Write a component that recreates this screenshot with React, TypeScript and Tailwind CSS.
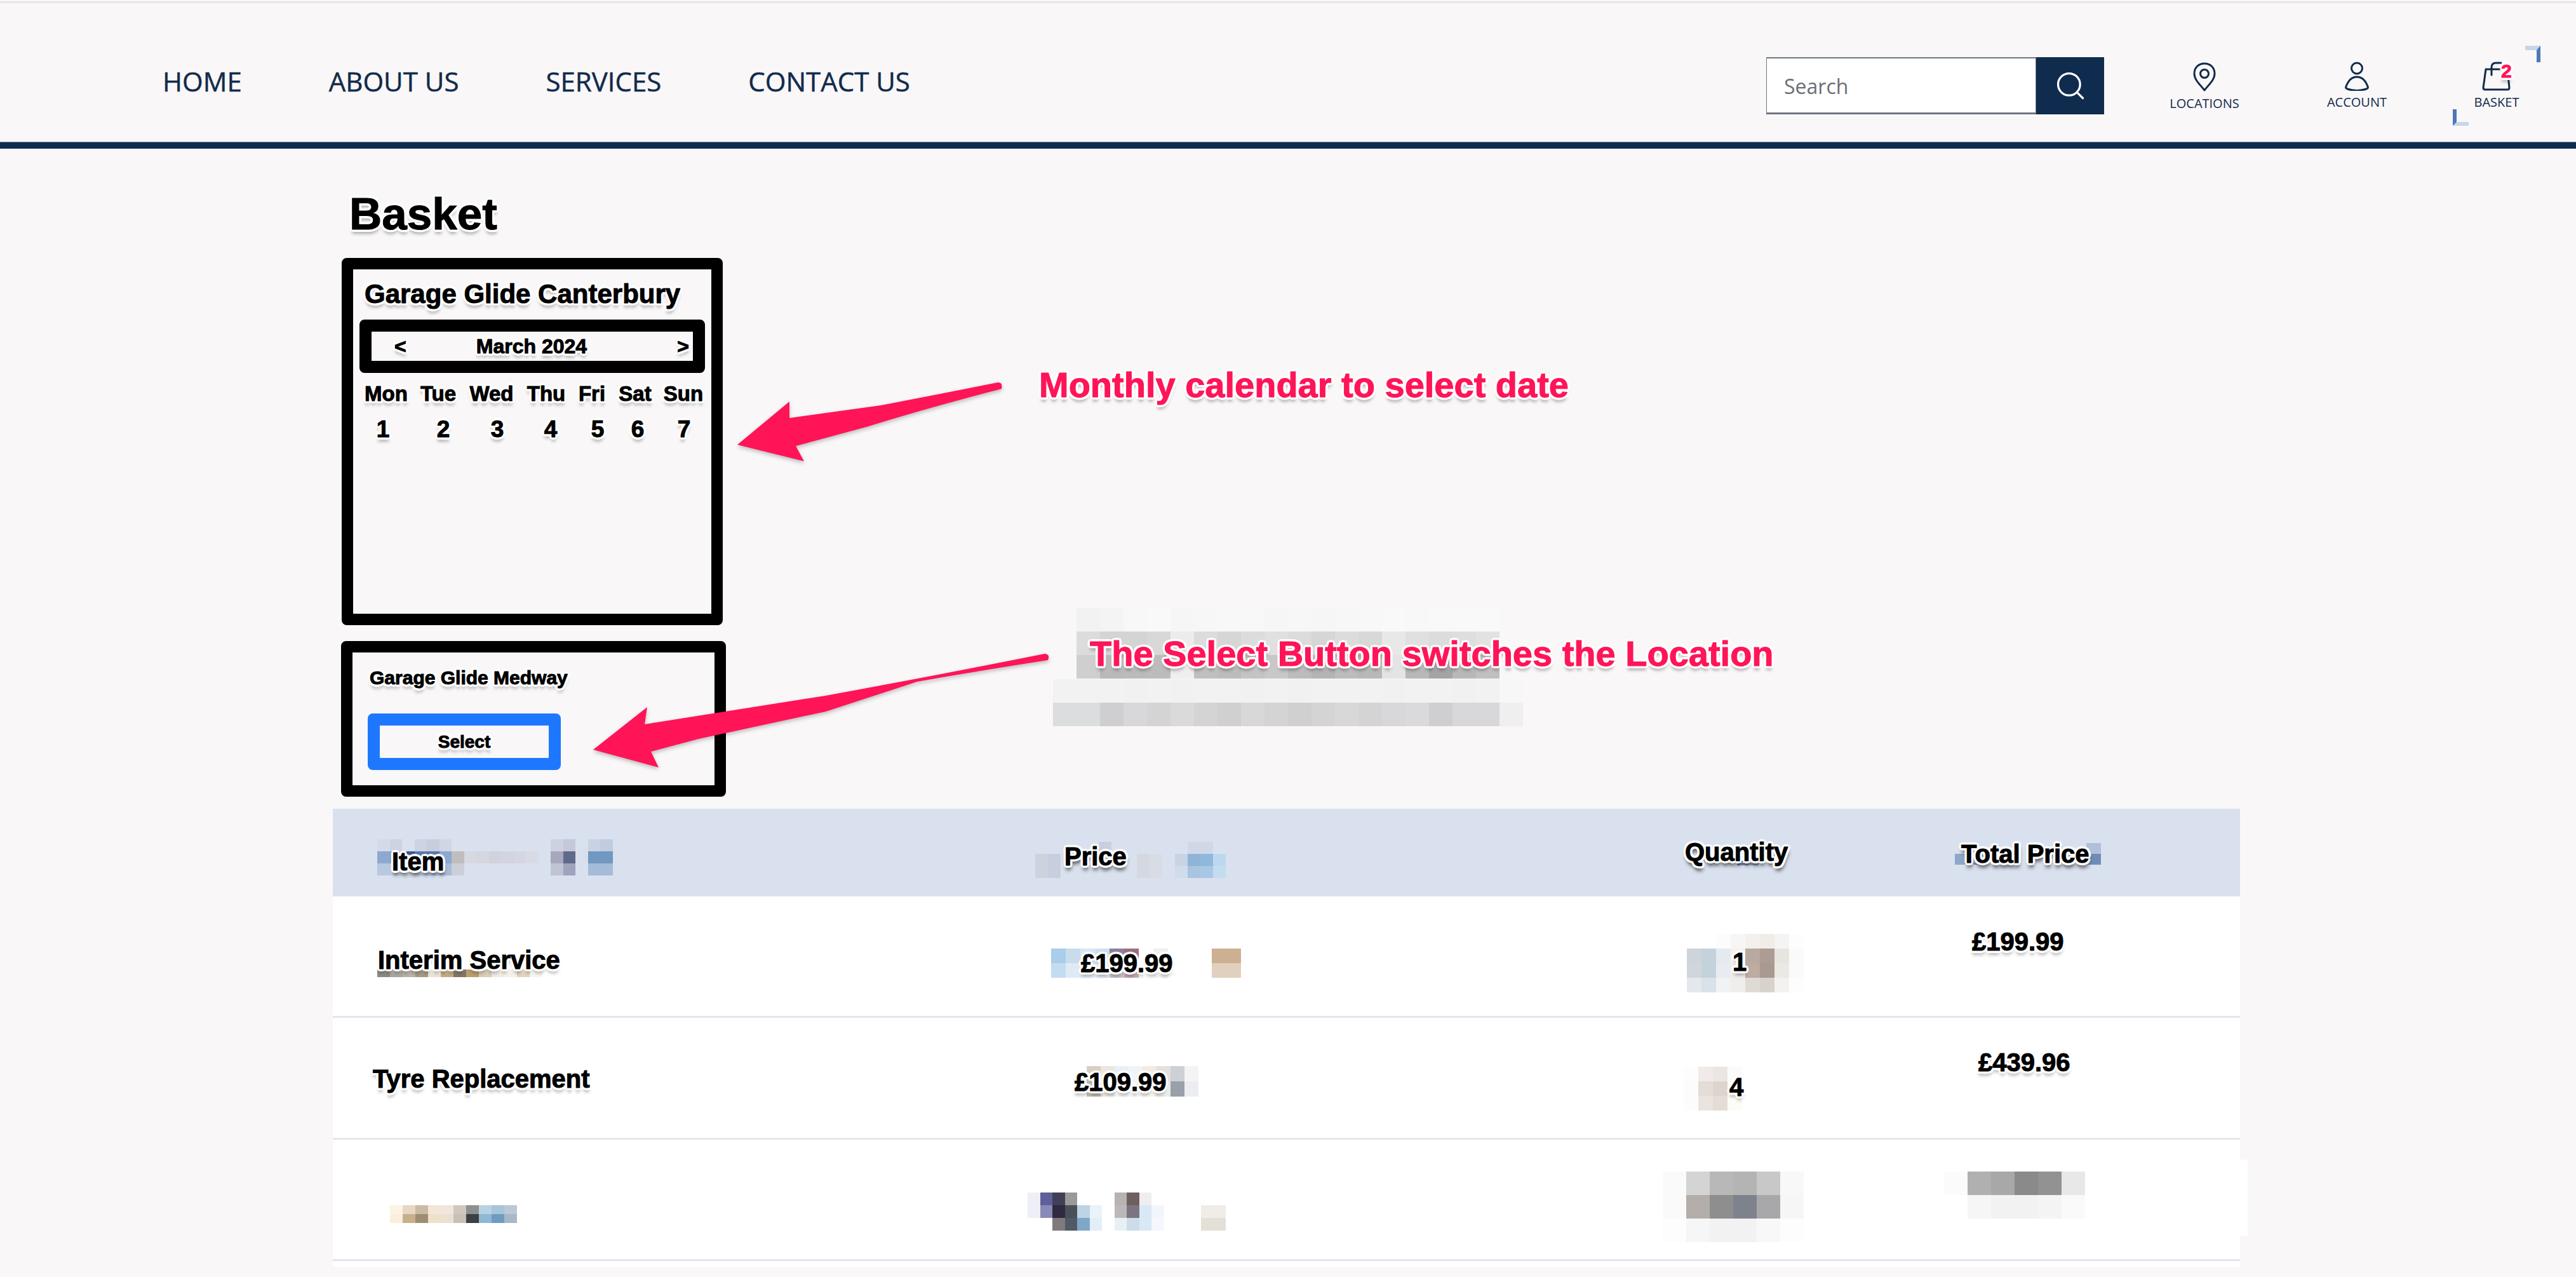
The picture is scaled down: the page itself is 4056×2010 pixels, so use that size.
import { Search } from 'lucide-react';

const outline =
  "[-webkit-text-stroke:1px_currentColor] [text-shadow:4px_0_0_#fff,-4px_0_0_#fff,0_4px_0_#fff,0_-4px_0_#fff,3px_3px_0_#fff,-3px_3px_0_#fff,3px_-3px_0_#fff,-3px_-3px_0_#fff,0_7px_5px_rgba(0,0,0,0.3)]";
const outlineDark =
  "[-webkit-text-stroke:1px_currentColor] [text-shadow:4px_0_0_#fff,-4px_0_0_#fff,0_4px_0_#fff,0_-4px_0_#fff,3px_3px_0_#fff,-3px_3px_0_#fff,3px_-3px_0_#fff,-3px_-3px_0_#fff,1px_7px_6px_rgba(0,0,0,0.85)]";
const cellText = `relative z-10 block whitespace-nowrap text-[40px] leading-none font-bold text-black ${outline}`;
const headText = `relative z-10 block whitespace-nowrap text-[40px] leading-none font-bold text-black ${outlineDark}`;

const days = ['Mon', 'Tue', 'Wed', 'Thu', 'Fri', 'Sat', 'Sun'];
const dates = [
  { n: '1', cls: 'pr-[10px]' },
  { n: '2', cls: 'pl-[16px]' },
  { n: '3', cls: 'pl-[18px]' },
  { n: '4', cls: 'pl-[14px]' },
  { n: '5', cls: 'pl-[18px]' },
  { n: '6', cls: 'pl-[8px]' },
  { n: '7', cls: 'pl-[2px]' },
];

// pixelated leftovers, each row is a list of hex colours, "-" leaves the cell empty
function Mosaic({ className, rows }: { className: string; rows: string[] }) {
  return (
    <div className={`absolute grid ${className}`}>
      {rows.flatMap((row, r) =>
        row.split(' ').map((c, i) => (
          <div key={`${r}-${i}`} style={c === '-' ? undefined : { backgroundColor: c }} />
        )),
      )}
    </div>
  );
}

function Arrows() {
  return (
    <svg
      className="absolute top-0 left-0 z-20 h-[2010px] w-[4056px] drop-shadow-[0_3px_3px_rgba(0,0,0,0.25)]"
      viewBox="0 0 4056 2010"
      fill="#ff1458"
    >
      <path d="M1161 700 L1243 632 L1243 658 Q1300 650 1387 638 Q1480 620 1571 602 Q1579 601 1577 612 Q1460 642 1364 672 Q1290 692 1253 702 L1266 726 Z" />
      <path d="M934 1180 L1019 1113 L1015 1140 L1300 1095 Q1480 1062 1645 1029 Q1654 1030 1650 1039 Q1540 1056 1444 1073 L1300 1120 L1100 1163 L1025 1183 L1037 1208 Z" />
    </svg>
  );
}

export default function App() {
  return (
    <div className="relative h-[2010px] w-[4056px] overflow-hidden bg-[#f9f7f8] font-['Liberation_Sans',Arial,sans-serif]">
      {/* Top nav */}
      <div className="mt-[2px] h-[3px] bg-[#e6e6e6]" />
      <header className="flex h-[218px] items-start font-['Open_Sans',sans-serif] text-[#122b4a]">
        <nav className="flex gap-[137px] pt-[98px] pl-[256px] text-[42px] leading-[50px] font-medium whitespace-nowrap [-webkit-text-stroke:0.5px_currentColor]">
          <a>HOME</a>
          <a>ABOUT US</a>
          <a>SERVICES</a>
          <a>CONTACT US</a>
        </nav>
        <div className="relative mr-[5px] ml-auto flex items-start pt-[85px]">
          <div className="flex h-[90px] w-[425px] items-center border-x border-t-2 border-b-[3px] border-[#6f7580] bg-white pt-[3px] pl-[27px] text-[32px] text-[#6b6f76]">
            <span>Search</span>
          </div>
          <div className="flex h-[90px] w-[107px] items-center justify-center bg-[#0f2c4f]">
            <Search className="h-[52px] w-[52px] text-white" strokeWidth={1.5} />
          </div>
          <div className="ml-[58px] flex w-[200px] flex-col items-center">
            <svg className="mt-[8px] h-[46px] w-[36px]" viewBox="0 0 36 46" fill="none" stroke="#122b4a" strokeWidth="3">
              <path d="M18 44 C12 36 2 28 2 18 C2 8 9 2 18 2 C27 2 34 8 34 18 C34 28 24 36 18 44 Z" strokeLinejoin="round" />
              <circle cx="18" cy="18" r="6.5" />
            </svg>
            <span className="mt-[7px] text-[20px] leading-[24px]">LOCATIONS</span>
          </div>
          <div className="ml-[40px] flex w-[200px] flex-col items-center">
            <svg className="mt-[7px] h-[46px] w-[38px]" viewBox="0 0 38 46" fill="none" stroke="#122b4a" strokeWidth="3">
              <circle cx="19" cy="10.5" r="8.5" />
              <path d="M19 24 C28 24 33 31 36 39 C37 41 36 42 34 43 C25 46 13 46 4 43 C2 42 1 41 2 39 C5 31 10 24 19 24 Z" />
            </svg>
            <span className="mt-[6px] text-[20px] leading-[24px]">ACCOUNT</span>
          </div>
          <div className="relative flex w-[240px] flex-col items-center">
            <svg className="mt-[7px] h-[46px] w-[46px]" viewBox="0 0 46 46" fill="none" stroke="#122b4a" strokeWidth="3" strokeLinecap="round">
              <path d="M6 12 H40 L43 41 Q43 44 40 44 H5 Q2 44 2 41 Z" strokeLinejoin="round" />
              <path d="M15 21 V9 Q15 2 22 2 H30" />
            </svg>
            <span className="mt-[6px] text-[20px] leading-[24px]">BASKET</span>
            <span className={`absolute top-[8px] left-[127px] font-['Liberation_Sans',sans-serif] text-[30px] leading-[28px] font-bold text-[#ff1458] ${outline}`}>2</span>
          </div>
          {/* focus corners around the basket */}
          <div className="absolute top-[67px] left-[1195px] h-[26px] w-[24px] border-t-[7px] border-r-[6px] border-t-[#c6d6ea] border-r-[#4a7ab5]" />
          <div className="absolute top-[167px] left-[1081px] h-[26px] w-[25px] border-b-[6px] border-l-[6px] border-b-[#c6d6ea] border-l-[#4a7ab5]" />
        </div>
      </header>
      <div className="h-[11px] border-t border-[#8f9aa8] bg-[#0f2c4f]" />

      <main className="pl-[524px]">
        <h1 className={`mt-[67px] ml-[26px] text-[71px] leading-none font-bold text-black ${outline}`}>Basket</h1>

        {/* Calendar card */}
        <section className="mt-[34px] ml-[14px] h-[578px] w-[600px] rounded-lg border-[18px] border-black">
          <h2 className={`mt-[18px] ml-[18px] text-[42px] leading-none font-bold whitespace-nowrap ${outline}`}>Garage Glide Canterbury</h2>
          <div className="mt-[19px] ml-[10px] h-[84px] w-[544px] rounded-lg border-[19px] border-black">
            <div className={`flex h-[46px] items-center justify-between pr-[6px] pl-[36px] text-[32px] font-bold ${outline}`}>
              <span>&lt;</span>
              <span className="mr-[32px]">March 2024</span>
              <span>&gt;</span>
            </div>
          </div>
          <div className="mt-[16px] ml-[8px] grid w-[552px] grid-cols-[88px_76px_92px_80px_64px_72px_80px] text-center">
            {days.map((d) => (
              <span key={d} className={`text-[33px] leading-none font-bold ${outline}`}>{d}</span>
            ))}
            {dates.map((d) => (
              <span key={d.n} className={`mt-[21px] text-[37px] leading-none font-bold ${d.cls} ${outline}`}>{d.n}</span>
            ))}
          </div>
        </section>

        {/* Other location */}
        <section className="mt-[25px] ml-[13px] h-[245px] w-[606px] rounded-lg border-[18px] border-black">
          <h3 className={`mt-[25px] ml-[27px] text-[30px] leading-none font-bold whitespace-nowrap ${outline}`}>Garage Glide Medway</h3>
          <button className={`mt-[41px] ml-[24px] h-[89px] w-[304px] rounded-lg border-[19px] border-[#1e78ff] text-[28px] font-bold ${outline}`}>Select</button>
        </section>

        {/* Basket table */}
        <div className="mt-[19px] w-[3003px]">
          <div className="grid h-[138px] grid-cols-[1096px_980px_450px_477px] bg-[#dae1ee]">
            <span className={`pt-[63px] pl-[93px] ${headText}`}>Item</span>
            <span className={`pt-[55px] pl-[56px] ${headText}`}>Price</span>
            <span className={`pt-[48px] pl-[53px] ${headText}`}>Quantity</span>
            <span className={`pt-[51px] pl-[38px] ${headText}`}>Total Price</span>
          </div>
          <div className="grid h-[191px] grid-cols-[1096px_980px_450px_477px] border-b-[3px] border-[#e4e6ee] bg-white">
            <span className={`pt-[80px] pl-[71px] ${cellText}`}>Interim Service</span>
            <span className={`pt-[85px] pl-[82px] ${cellText}`}>£199.99</span>
            <span className={`pt-[83px] pl-[128px] ${cellText}`}>1</span>
            <span className={`pt-[51px] pl-[55px] ${cellText}`}>£199.99</span>
          </div>
          <div className="grid h-[192px] grid-cols-[1096px_980px_450px_477px] border-b-[3px] border-[#e4e6ee] bg-white">
            <span className={`pt-[76px] pl-[63px] ${cellText}`}>Tyre Replacement</span>
            <span className={`pt-[81px] pl-[72px] ${cellText}`}>£109.99</span>
            <span className={`pt-[89px] pl-[123px] ${cellText}`}>4</span>
            <span className={`pt-[50px] pl-[65px] ${cellText}`}>£439.96</span>
          </div>
          <div className="h-[191px] border-b-[3px] border-[#e4e6ee] bg-white" />
          <div className="h-[9px] bg-white" />
        </div>
      </main>

      {/* blurred content that was masked in the screenshot */}
      <Mosaic
        className="top-[957px] left-[1695px] grid-cols-[repeat(18,37px)] auto-rows-[37px]"
        rows={[
          '#f2f2f2 #f4f4f4 #f8f8f8 #f9f9f9 #f6f6f6 #f7f7f7 #f8f8f8 #f8f8f8 #f6f6f6 #f7f7f7 #f6f6f6 #f7f7f7 #f8f8f8 #f9f9f9 #f8f8f8 #f9f9f9 #f9f9f9 #f9f9f9',
          '#dcdcdc #d4d4d4 #d4d4d4 #d8d8d8 #ececec #dcdcdc #d6d6d6 #dcdcdc #e0e0e0 #dcdcdc #d6d6d6 #dcdcdc #d8d8d8 #e8e8e8 #e0e0e0 #dcdcdc #dedede #e2e2e2',
          '#cfcfcf #b9b9b9 #bbbbbb #bcbcbc #efefef #c0c0c0 #bcbcbc #c4c4c4 #c8c8c8 #bcbcbc #b4b4b4 #bcbcbc #b8b8b8 #e4e4e4 #b8b8b8 #a4a4a6 #b8b8b8 #c0c0c0',
        ]}
      />
      <Mosaic
        className="top-[1069px] left-[1658px] grid-cols-[repeat(20,37px)] auto-rows-[37px]"
        rows={[
          '#f2f2f2 #f2f2f2 #f2f2f2 #f1f1f1 #f2f2f2 #f1f1f1 #f2f2f2 #f2f2f2 #f1f1f1 #f2f2f2 #f1f1f1 #f2f2f2 #f2f2f2 #f2f2f2 #f1f1f1 #f2f2f2 #f2f2f2 #f1f1f1 #f2f2f2 #f7f7f7',
          '#dcdddf #dcdddf #cfcfd1 #d8d8da #d4d4d4 #dadada #d4d4d4 #d0d0d0 #d8d8d8 #d4d4d4 #d0d0d0 #d4d4d4 #d8d8d8 #d4d4d4 #d8d8da #dadadc #cfcfd1 #d8d8da #d8d8da #efefef',
        ]}
      />
      <Mosaic
        className="top-[1321px] left-[594px] grid-cols-[repeat(19,19.5px)] auto-rows-[19px]"
        rows={[
          '#d4dae8 #ccd3e3 - #cdd3e2 #c6cede #d0d6e3 - - - - - - - - #cdd2e0 #c4c8d8 - #c8d2e3 #c0cce0',
          '#8fa8cf #7f9cc8 #3f5a8c #5b78ab #5a76aa #8da8cf #c0bdbf #d6d8e2 #d4d6e0 #d0d2de #d2d4e0 #d4d6e2 #d8dae6 - #a6a8bb #5f6a8a #d9dfec #7098c0 #7098c0',
          '#b8c8e0 #c4d0e4 - #c0cce0 #a8bcd8 #a8bcd8 #cccfd8 - - - - - - - #c0c4d4 #9ea4bc - #a4bcd8 #a4bcd8',
        ]}
      />
      <Mosaic
        className="top-[1325px] left-[1630px] grid-cols-[repeat(15,20px)] auto-rows-[19px]"
        rows={[
          '- - - - - #c8cfdf - - - - - - #d0d8e8 #d0d8e8 -',
          '#cdd2df #c8cede - - - - - - #d4d8e0 #d8dce4 - #c8d4e4 #8fb4d8 #90b8dc #bcd8ec',
          '#cdd2df #c8cede - - - - - - #d4d8e0 #d8dce4 - #d0dcea #a8c4e0 #a8c8e4 #c4dcf0',
        ]}
      />
      <Mosaic className="top-[1354px] left-[2735px] grid-cols-[repeat(2,17px)] auto-rows-[8px]" rows={['#6f85b0 #8fa0c4']} />
      <Mosaic
        className="top-[1327px] left-[3078px] grid-cols-[repeat(10,23px)] auto-rows-[17px]"
        rows={[
          '- - - - - - - - - #b0c0d8',
          '#8ea6c8 #7f98c0 - - - - - - - #6f8cb8',
        ]}
      />
      <Mosaic
        className="top-[1526px] left-[594px] grid-cols-[repeat(13,20px)] auto-rows-[12px]"
        rows={['#8d8a85 #a8a59e #b9b2a6 #a39a85 #e8e3d8 #c0ab85 #7f7566 #b99f70 #d9cdb8 #f0ece4 #f5f0e8 #e0d4c0 #f8f4ee']}
      />
      <Mosaic
        className="top-[1493px] left-[1655px] grid-cols-[repeat(13,23px)] auto-rows-[23px]"
        rows={[
          '#a9cdea #c8dcec #d8e8f4 #cfe0ee #8c7f9a #9a6f80 - #eeeeee - - - #cdb091 #cdb091',
          '#c4dcf0 #dfeaf4 #e8f0f8 #e4eef6 #c8c0cc #c8a8b4 - #f4f4f4 - - - #e0d0bd #e0d0bd',
        ]}
      />
      <Mosaic
        className="top-[1678px] left-[1689px] grid-cols-[repeat(9,22px)] auto-rows-[24px]"
        rows={[
          '- #d8cfc0 #ece6dc #e8eff8 #f0f4f8 #f4ebdf #e4e0dc #cdd0d6 #f4f4f4',
          '- #c4bdb0 #e8e4dc #f0f4f8 #f4f6f8 #f8f4ee #ecece8 #9aa0aa #ecedf0',
        ]}
      />
      <Mosaic
        className="top-[1897px] left-[614px] grid-cols-[repeat(10,20px)] auto-rows-[14px]"
        rows={[
          '#fdf3e4 #e6d8c2 #cbbba6 #f3e6d8 #f1e6dc #cfc8bf #8f8f8f #b9d2e2 #a8c4d8 #bcc8d4',
          '#fbeedd #c9b08c #a08c70 #efe0cc #ece0d0 #c8c0b4 #3c3f46 #8fb8d4 #6f9cc0 #a8b8c8',
        ]}
      />
      <Mosaic
        className="top-[1877px] left-[1618px] grid-cols-[repeat(16,19.5px)] auto-rows-[20px]"
        rows={[
          '#eeeef6 #5f5f9a #3f3f55 #9a9a9a - - - #b9b2b2 #6f6060 #eeeeee - - - - - -',
          '#eeeef6 #8a8ab8 #2f2a40 #4a4f58 #bcd4e4 #eaf2fa - #bdb8b8 #7a7580 #d8e8f4 #f0f6fc - - - #f0ece8 #f0ece8',
          '- - #807a7c #4f5a66 #7fa8c8 #e4eef6 - #e8f0f6 #ccdce8 #d8e8f4 #f4f8fc - - - #e4e0d8 #e4e0d8',
        ]}
      />
      <Mosaic
        className="top-[1470px] left-[2656px] grid-cols-[repeat(8,23px)] auto-rows-[23px]"
        rows={[
          '- - #fcfcfc #f8f6f4 #f4f0ee #f0ece8 #f6f4f2 #fdfdfd',
          '#cdd4da #c4d2dc #e4eaee #f4f2f0 #b8aaa0 #ac9c94 #e8e4e0 #fafafa',
          '#d0d6dc #c4d2dc #e8ecf0 #f0eeec #bcaca2 #a89a90 #ece8e4 #fafafa',
          '#e4e8ec #d8e2e8 #f0f2f4 #f0eeec #e0dad4 #d8d2cc #f4f2f0 #fdfdfd',
        ]}
      />
      <Mosaic
        className="top-[1679px] left-[2651px] grid-cols-[repeat(4,23px)] auto-rows-[23px]"
        rows={[
          '#fdfdfd #f0ebe8 #ece6e2 #fbfbfb',
          '#fcfcfc #e4dcd6 #ddd5cd -',
          '#fcfcfc #eae4de #e4dcd6 #fbfbf8',
        ]}
      />
      <Mosaic
        className="top-[1844px] left-[2618px] grid-cols-[repeat(6,37px)] auto-rows-[37px]"
        rows={[
          '#fafafa #d4d4d4 #b8b8b8 #b4b4b4 #c8c8c8 #f8f8f8',
          '#fafafa #b4aeaa #8e8e8e #7e828c #a8a8aa #f6f6f6',
          '#fdfdfd #f6f6f6 #f2f2f2 #f2f2f2 #f8f8f8 #fdfdfd',
        ]}
      />
      <Mosaic
        className="top-[1844px] left-[3061px] grid-cols-[repeat(6,37px)] auto-rows-[37px]"
        rows={[
          '#fbfbfb #b0b0b0 #a8a8a8 #8a8a8a #929292 #e8e8e8',
          '- #f6f6f6 #f2f2f2 #f2f2f2 #f4f4f4 #fafafa',
        ]}
      />
      <div className="absolute top-[1825px] left-[3527px] h-[120px] w-[12px] bg-white" />

      <Arrows />

      {/* Annotations */}
      <p className={`absolute top-[578px] left-[1636px] z-30 text-[56px] leading-none font-bold whitespace-nowrap text-[#ff1458] ${outline}`}>Monthly calendar to select date</p>
      <p className={`absolute top-[1001px] left-[1716px] z-30 text-[56px] leading-none font-bold whitespace-nowrap text-[#ff1458] ${outline}`}>The Select Button switches the Location</p>
    </div>
  );
}
